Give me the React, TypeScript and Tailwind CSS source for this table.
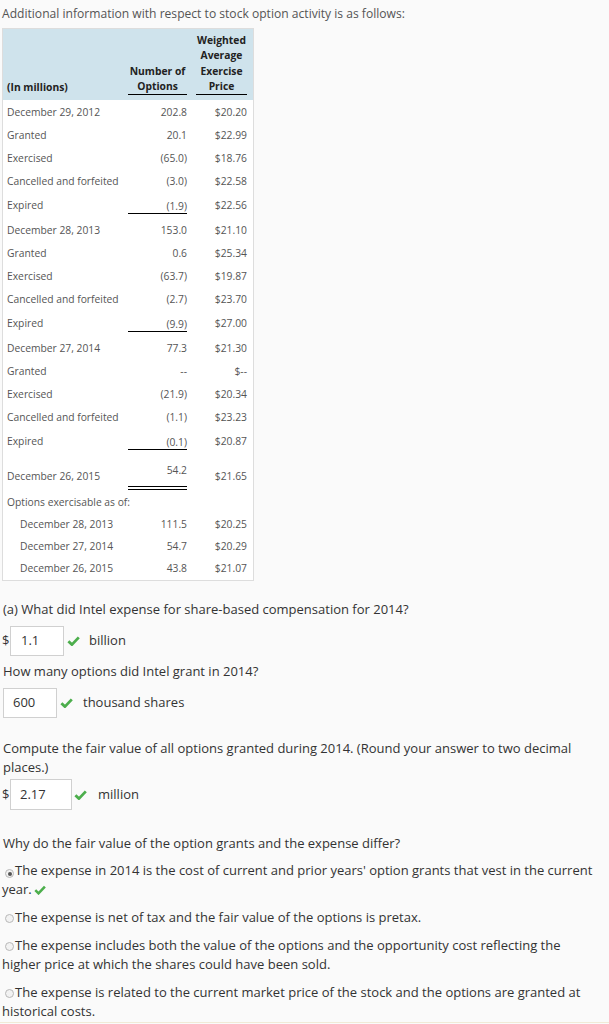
import React from "react";

type Row = {
  label: string;
  num: string;
  price: string;
  kind?: "plain" | "single" | "double" | "heading";
  indent?: boolean;
  short?: boolean;
};

const ROWS: Row[] = [
  { label: "December 29, 2012", num: "202.8", price: "$20.20" },
  { label: "Granted", num: "20.1", price: "$22.99" },
  { label: "Exercised", num: "(65.0)", price: "$18.76" },
  { label: "Cancelled and forfeited", num: "(3.0)", price: "$22.58" },
  { label: "Expired", num: "(1.9)", price: "$22.56", kind: "single" },
  { label: "December 28, 2013", num: "153.0", price: "$21.10" },
  { label: "Granted", num: "0.6", price: "$25.34" },
  { label: "Exercised", num: "(63.7)", price: "$19.87" },
  { label: "Cancelled and forfeited", num: "(2.7)", price: "$23.70" },
  { label: "Expired", num: "(9.9)", price: "$27.00", kind: "single" },
  { label: "December 27, 2014", num: "77.3", price: "$21.30" },
  { label: "Granted", num: "--", price: "$--" },
  { label: "Exercised", num: "(21.9)", price: "$20.34" },
  { label: "Cancelled and forfeited", num: "(1.1)", price: "$23.23" },
  { label: "Expired", num: "(0.1)", price: "$20.87", kind: "single" },
  { label: "December 26, 2015", num: "54.2", price: "$21.65", kind: "double" },
  { label: "Options exercisable as of:", num: "", price: "", kind: "heading" },
  { label: "December 28, 2013", num: "111.5", price: "$20.25", indent: true, short: true },
  { label: "December 27, 2014", num: "54.7", price: "$20.29", indent: true, short: true },
  { label: "December 26, 2015", num: "43.8", price: "$21.07", indent: true, short: true },
];

const grid = "grid grid-cols-[112px_59px_51px] gap-x-[9px] pl-[4px] pr-[6px]";

function TableRow({ row }: { row: Row }) {
  if (row.kind === "double") {
    return (
      <div className={`${grid} h-[36px] items-start`}>
        <div className="pt-[14px] leading-[14px]">{row.label}</div>
        <div className="pt-[8px]">
          <div className="text-right leading-[14px] pb-[9px]">{row.num}</div>
          <div className="h-[4px] border-y border-black" />
        </div>
        <div className="pt-[14px] leading-[14px] text-right">{row.price}</div>
      </div>
    );
  }
  if (row.kind === "single") {
    return (
      <div className={`${grid} h-[26px] items-center`}>
        <div>{row.label}</div>
        <div className="text-right leading-[14px] border-b border-black">{row.num}</div>
        <div className="text-right">{row.price}</div>
      </div>
    );
  }
  return (
    <div className={`${grid} ${row.short ? "h-[22px]" : "h-[23px]"} items-center`}>
      <div className={`whitespace-nowrap ${row.indent ? "pl-[13px]" : ""}`}>{row.label}</div>
      <div className="text-right">{row.num}</div>
      <div className="text-right">{row.price}</div>
    </div>
  );
}

function Check() {
  return (
    <svg width="13" height="10" viewBox="0 0 13 10" className="shrink-0">
      <path d="M1.4 5.2 L4.9 8.6 L11.8 1.4" fill="none" stroke="#4cae4c" strokeWidth="2.8" />
    </svg>
  );
}

function InlineCheck() {
  return (
    <svg width="12" height="10" viewBox="0 0 13 10" className="inline-block ml-[2px] align-[-1px]">
      <path d="M1.4 5.2 L4.9 8.6 L11.8 1.4" fill="none" stroke="#4cae4c" strokeWidth="2.8" />
    </svg>
  );
}

function Radio({ on }: { on?: boolean }) {
  return (
    <span className="inline-flex items-center justify-center w-[9px] h-[9px] rounded-full border border-[#b8b8b8] bg-[#f2f2f2] ml-[3px] mr-[1px] align-[-0.5px]">
      {on && <span className="w-[4px] h-[4px] rounded-full bg-[#555555]" />}
    </span>
  );
}

function Option({ on, first, children }: { on?: boolean; first?: boolean; children: React.ReactNode }) {
  return (
    <p className={`${first ? "mt-[8px]" : "mt-[9px]"} w-[594px] text-[13px] leading-[19px] text-[#333333]`}>
      <Radio on={on} />
      {children}
    </p>
  );
}

export default function App() {
  return (
    <div className="w-[609px] h-[1024px] bg-[#fafafa] font-['Open_Sans',sans-serif] px-[2px] overflow-hidden">
      <p className="pt-[5px] text-[12.1px] leading-[18px] text-[#555555]">
        Additional information with respect to stock option activity is as follows:
      </p>

      <div className="mt-[5px] w-[252px] border border-[#dddddd] bg-white text-[10.3px] text-[#555555]">
        <div className={`${grid} bg-[#cfe3ec] pt-[4px] pb-[5px] items-end font-bold leading-[15.3px] text-[#222222]`}>
          <div>(In millions)</div>
          <div className="text-center border-b border-black">
            Number of
            <br />
            Options
          </div>
          <div className="text-center border-b border-black">
            Weighted
            <br />
            Average
            <br />
            Exercise
            <br />
            Price
          </div>
        </div>
        <div className="pt-[1px]">
          {ROWS.map((r, i) => (
            <TableRow key={i} row={r} />
          ))}
        </div>
      </div>

      <p className="mt-[19px] ml-[1px] text-[13px] leading-[19px] text-[#333333]">
        (a) What did Intel expense for share-based compensation for 2014?
      </p>
      <div className="mt-[7px] flex items-center text-[13px] text-[#333333]">
        <span className="w-[8px]">$</span>
        <div className="w-[54px] h-[30px] border border-[#d0d0d0] bg-white pl-[10px] flex items-center">1.1</div>
        <span className="ml-[3px]">
          <Check />
        </span>
        <span className="ml-[9px]">billion</span>
      </div>

      <p className="mt-[6px] ml-[1px] text-[13px] leading-[19px] text-[#333333]">
        How many options did Intel grant in 2014?
      </p>
      <div className="mt-[7px] flex items-center text-[13px] text-[#333333]">
        <div className="ml-[1px] w-[54px] h-[30px] border border-[#d0d0d0] bg-white pl-[9px] flex items-center">600</div>
        <span className="ml-[3px]">
          <Check />
        </span>
        <span className="ml-[10px]">thousand shares</span>
      </div>

      <p className="mt-[21px] ml-[1px] w-[594px] text-[13px] leading-[19px] text-[#333333]">
        Compute the fair value of all options granted during 2014. (Round your answer to two decimal places.)
      </p>
      <div className="mt-[2px] flex items-center text-[13px] text-[#333333]">
        <span className="w-[8px]">$</span>
        <div className="w-[62px] h-[31px] border border-[#d0d0d0] bg-white pl-[9px] flex items-center">2.17</div>
        <span className="ml-[2px]">
          <Check />
        </span>
        <span className="ml-[11px]">million</span>
      </div>

      <p className="mt-[24px] ml-[1px] text-[13px] leading-[19px] text-[#333333]">
        Why do the fair value of the option grants and the expense differ?
      </p>
      <div className="mt-[1px]">
        <Option on first>
          The expense in 2014 is the cost of current and prior years&apos; option grants that vest in the current year.
          <InlineCheck />
        </Option>
        <Option>The expense is net of tax and the fair value of the options is pretax.</Option>
        <Option>
          The expense includes both the value of the options and the opportunity cost reflecting the higher price at
          which the shares could have been sold.
        </Option>
        <Option>
          The expense is related to the current market price of the stock and the options are granted at historical
          costs.
        </Option>
      </div>
      <div className="mt-[1px] -mx-[2px] border-t border-[#f1ead6]" />
    </div>
  );
}
